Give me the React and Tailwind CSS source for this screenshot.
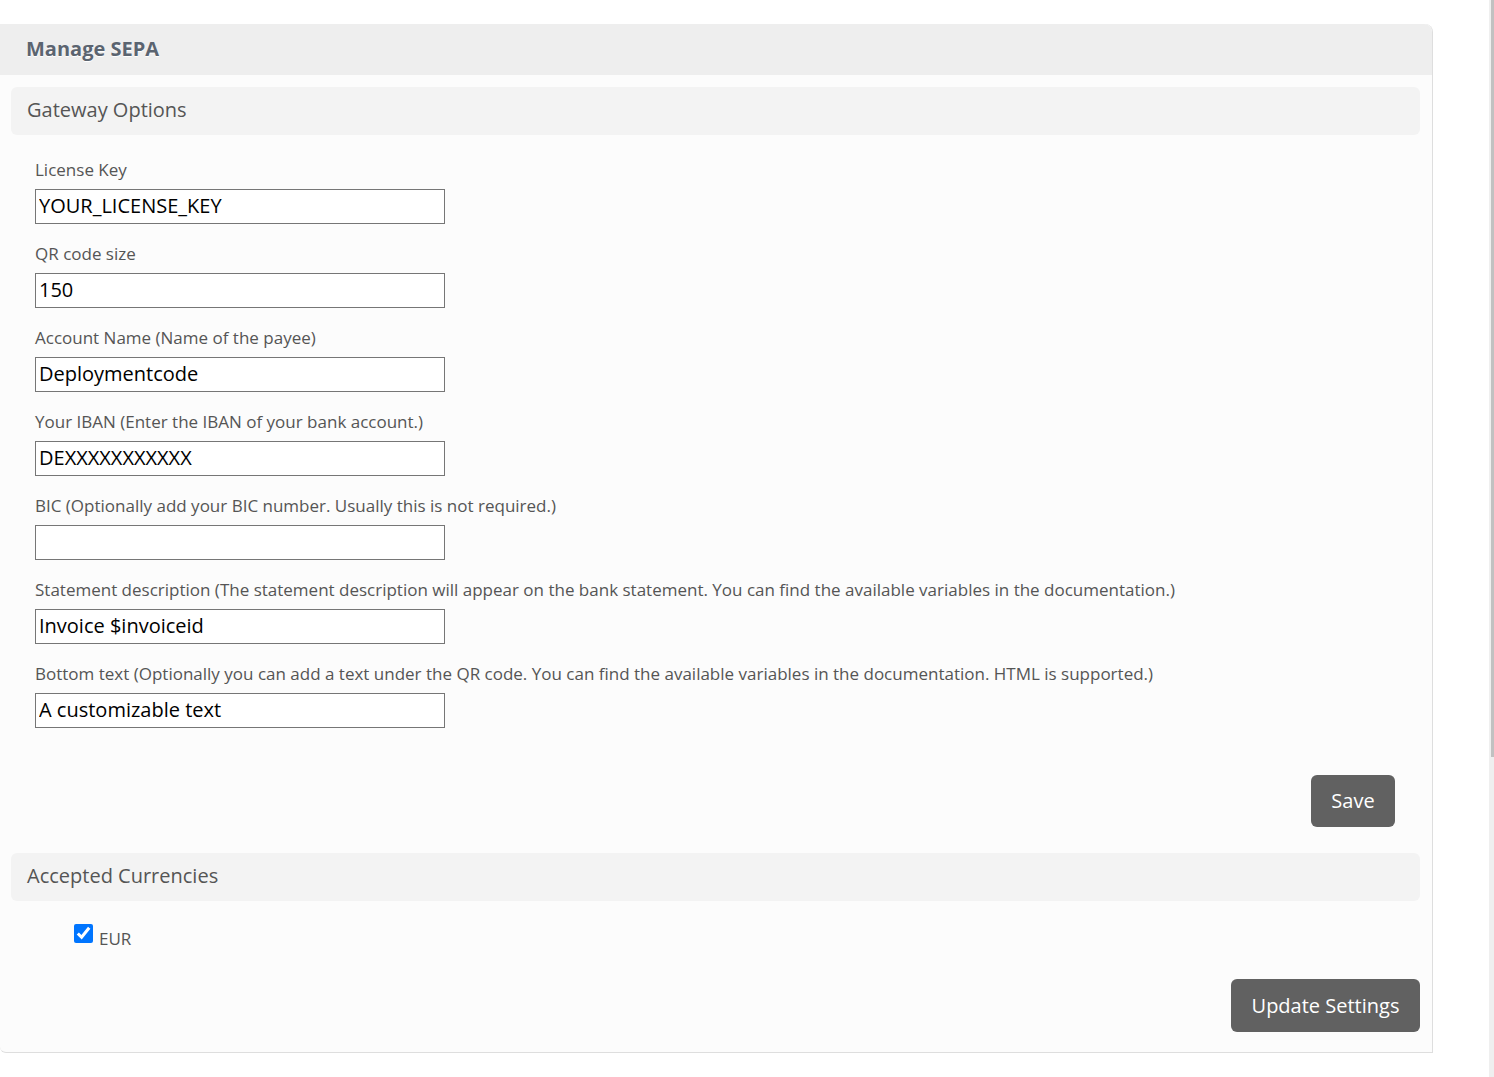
import React from "react";

const fields = [
  { label: "License Key", value: "YOUR_LICENSE_KEY" },
  { label: "QR code size", value: "150" },
  { label: "Account Name (Name of the payee)", value: "Deploymentcode" },
  { label: "Your IBAN (Enter the IBAN of your bank account.)", value: "DEXXXXXXXXXXX" },
  { label: "BIC (Optionally add your BIC number. Usually this is not required.)", value: "" },
  {
    label:
      "Statement description (The statement description will appear on the bank statement. You can find the available variables in the documentation.)",
    value: "Invoice $invoiceid",
  },
  {
    label:
      "Bottom text (Optionally you can add a text under the QR code. You can find the available variables in the documentation. HTML is supported.)",
    value: "A customizable text",
  },
];

function SectionBar({ title }) {
  return (
    <div className="h-[48px] bg-[#f3f3f3] rounded-md flex items-center px-4 pb-[2px] text-[20px] text-[#555]">
      {title}
    </div>
  );
}

export default function App() {
  return (
    <div
      className="min-h-screen bg-white flex"
      style={{ fontFamily: '"Open Sans", "Noto Sans", sans-serif' }}
    >
      <div className="w-[1433px] pt-[24px]">
        <div className="bg-[#fcfcfc] border-r border-b border-[#dedede] rounded-tr-lg rounded-bl-md">
          <div className="h-[51px] bg-[#eeeeee] rounded-tr-lg flex items-center pl-[26px]">
            <h1 className="text-[20px] font-bold text-[#5b6470] [text-shadow:0_1px_0_#fff] -mt-[2px]">
              Manage SEPA
            </h1>
          </div>

          <div className="pl-[11px] pr-[12px] pt-[12px] pb-[20px]">
            <SectionBar title="Gateway Options" />

            <form className="pl-[24px] pt-[23px]" onSubmit={(e) => e.preventDefault()}>
              {fields.map((f) => (
                <div key={f.label} className="mb-[18px]">
                  <label className="block text-[17px] leading-[24px] text-[#555] mb-[7px]">
                    {f.label}
                  </label>
                  <input
                    type="text"
                    defaultValue={f.value}
                    className="w-[410px] h-[35px] border border-[#767676] bg-white px-[3px] pb-[3px] text-[20px] text-black outline-none"
                  />
                </div>
              ))}

              <div className="flex justify-end pr-[25px] pt-[29px]">
                <button className="w-[84px] h-[52px] bg-[#616161] text-white text-[20px] rounded-md">
                  Save
                </button>
              </div>
            </form>

            <div className="mt-[26px]">
              <SectionBar title="Accepted Currencies" />
            </div>

            <label className="flex items-start gap-[6px] ml-[63px] mt-[23px] h-[24px]">
              <input
                type="checkbox"
                defaultChecked
                className="w-[19px] h-[19px] accent-[#0075ff] m-0"
              />
              <span className="text-[17px] leading-[24px] text-[#555] mt-[3px]">EUR</span>
            </label>

            <div className="flex justify-end mt-[31px]">
              <button className="w-[189px] h-[53px] bg-[#616161] text-white text-[20px] rounded-md">
                Update Settings
              </button>
            </div>
          </div>
        </div>
      </div>

      <div className="flex-1" />
      <div className="w-[5px] bg-[#efefef] self-stretch">
        <div className="ml-[2px] w-[3px] h-[757px] bg-[#c1c1c1]" />
      </div>
    </div>
  );
}
